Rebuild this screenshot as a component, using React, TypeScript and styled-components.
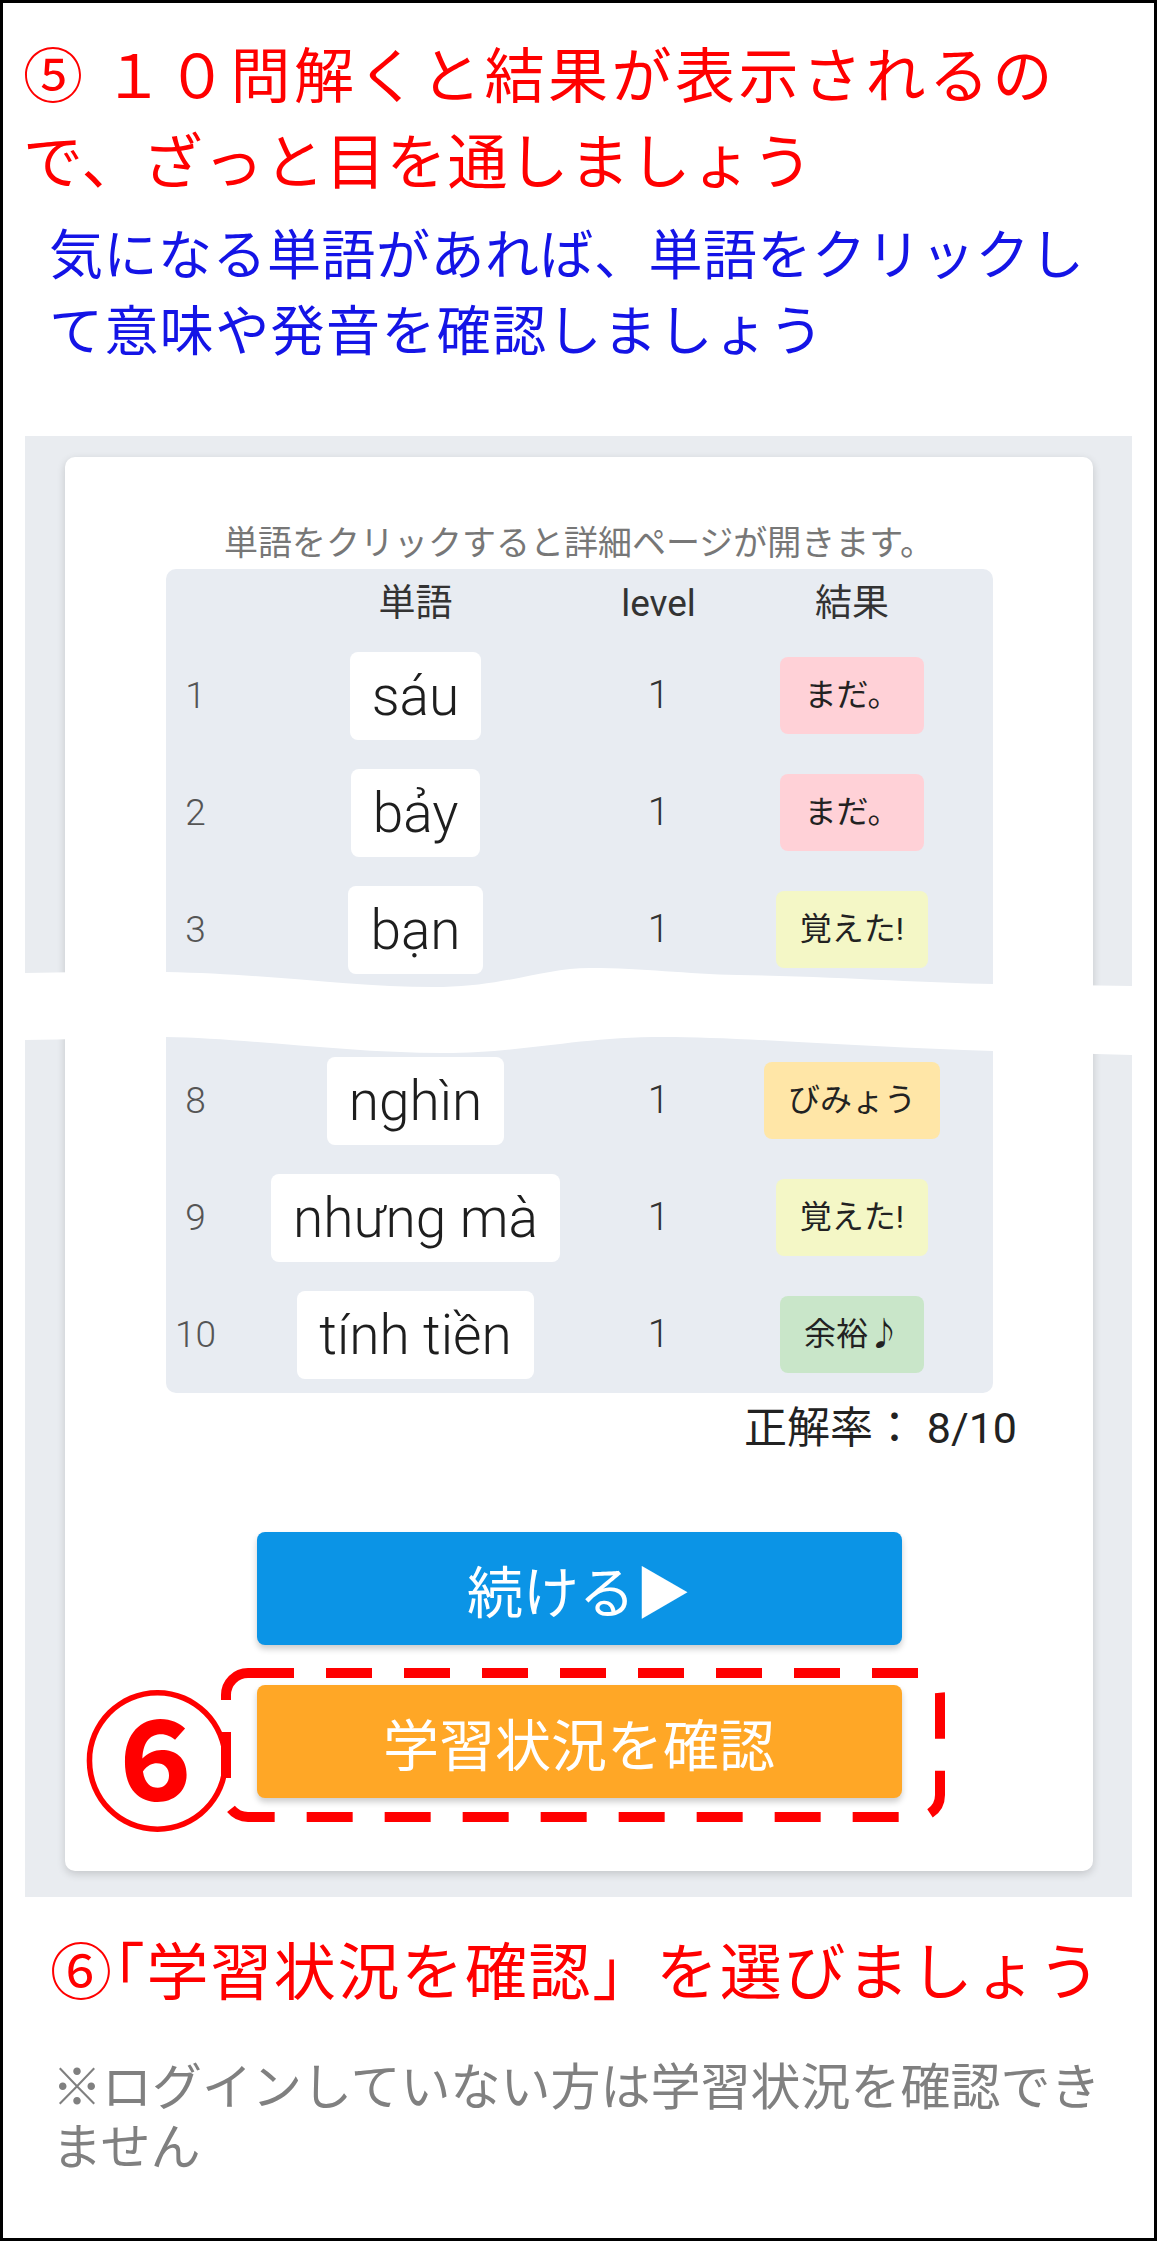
import styled, { createGlobalStyle } from 'styled-components';

const GlobalStyle = createGlobalStyle`
  html, body {
    margin: 0;
    padding: 0;
    background: #fff;
  }
  body {
    font-family: 'Noto Sans CJK JP', sans-serif;
  }
`;

const jp = `'Noto Sans CJK JP', sans-serif`;
const latin = `Roboto, 'Noto Sans CJK JP', sans-serif`;

const Page = styled.div`
  box-sizing: border-box;
  width: 1157px;
  height: 2241px;
  border: 3px solid #000;
  background: #fff;
  overflow: hidden;
`;

const Lead = styled.h1`
  margin: 0;
  padding: 26px 0 0 20px;
  font: 400 60px/86px ${jp};
  color: #f00;
`;

const Hint = styled.p`
  margin: 13px 0 0;
  padding-left: 46px;
  font: 400 54px/76px ${jp};
  color: #1414e6;
`;

const Line = styled.span<{ $track?: number }>`
  display: block;
  white-space: nowrap;
  letter-spacing: ${(p) => p.$track ?? 0}px;
`;

const Panel = styled.section`
  position: relative;
  margin: 70px 22px 0;
  padding: 21px 39px 26px 40px;
  background: #e9ecf0;
`;

const Card = styled.div`
  background: #fff;
  border-radius: 10px;
  box-shadow: 0 3px 8px rgba(0, 0, 0, 0.16);
  padding: 62px 0 73px;
`;

const Caption = styled.p`
  margin: 0 0 6px;
  text-align: center;
  font: 400 34px/44px ${jp};
  color: #777;
`;

const Table = styled.div`
  width: 827px;
  margin: 0 auto;
  background: #e8ecf2;
  border-radius: 10px;
`;

const Row = styled.div<{ $head?: boolean }>`
  display: grid;
  grid-template-columns: 60px 380px 106px 1fr;
  align-items: center;
  justify-items: center;
  height: ${(p) => (p.$head ? '68px' : '117px')};
`;

const HeadCell = styled.span`
  font: 400 37px/1 ${latin};
  color: #333;
`;

const Num = styled.span`
  font: 300 37px/1 ${latin};
  color: #555;
`;

const Level = styled.span`
  font: 300 39px/1 ${latin};
  color: #333;
`;

const Word = styled.span`
  background: #fff;
  border-radius: 8px;
  padding: 0 22px;
  height: 88px;
  font: 300 55px/88px ${latin};
  color: #1e1e1e;
  white-space: nowrap;
`;

type Tone = 'pink' | 'yellow' | 'orange' | 'green';

const toneColors: Record<Tone, string> = {
  pink: '#ffd1d7',
  yellow: '#f4f7c6',
  orange: '#ffe6a7',
  green: '#c9e6c9',
};

const Badge = styled.span<{ $tone: Tone }>`
  background: ${(p) => toneColors[p.$tone]};
  border-radius: 8px;
  padding: 0 24px;
  height: 77px;
  font: 400 32px/77px ${latin};
  color: #222;
  white-space: nowrap;
`;

const Break = styled.div`
  height: 54px;
`;

const Wave = styled.svg`
  position: absolute;
  left: 0;
  right: 0;
  width: 100%;
  height: 100px;
  margin-top: -28px;
  display: block;
`;

const Score = styled.div`
  display: flex;
  justify-content: flex-end;
  margin-top: 7px;
  padding-right: 76px;
  font: 400 43px/56px ${latin};
  color: #222;
`;

const Actions = styled.div`
  display: flex;
  flex-direction: column;
  align-items: center;
  gap: 40px;
  margin-top: 76px;
`;

const Button = styled.div<{ $color: string }>`
  width: 645px;
  height: 113px;
  border-radius: 8px;
  background: ${(p) => p.$color};
  color: #fff;
  text-align: center;
  font: 400 56px/113px ${jp};
  box-shadow: 0 4px 6px rgba(0, 0, 0, 0.2);
`;

const Focus = styled.div`
  position: relative;
`;

const DashFrame = styled.svg`
  position: absolute;
  left: -36px;
  top: -17px;
  width: 724px;
  height: 154px;
  pointer-events: none;
`;

const Marker = styled.span`
  position: absolute;
  right: 100%;
  top: 50%;
  margin-right: 24px;
  transform: translateY(-43%);
  font: 700 150px/1 ${jp};
  color: #f00;
`;

const Step = styled.p`
  margin: 28px 0 0;
  padding-left: 47px;
  font: 400 62px/86px ${jp};
  letter-spacing: 1.7px;
  color: #f00;
  white-space: nowrap;
`;

const Bracket = styled.span`
  font-feature-settings: 'halt' 1;
`;

const Note = styled.p`
  margin: 42px 0 0;
  padding-left: 49px;
  font: 400 50px/60px ${jp};
  color: #808080;
`;

type Item = { n: number; word: string; result: string; tone: Tone };

const upper: Item[] = [
  { n: 1, word: 'sáu', result: 'まだ。', tone: 'pink' },
  { n: 2, word: 'bảy', result: 'まだ。', tone: 'pink' },
  { n: 3, word: 'bạn', result: '覚えた!', tone: 'yellow' },
];

const lower: Item[] = [
  { n: 8, word: 'nghìn', result: 'びみょう', tone: 'orange' },
  { n: 9, word: 'nhưng mà', result: '覚えた!', tone: 'yellow' },
  { n: 10, word: 'tính tiền', result: '余裕♪', tone: 'green' },
];

function ResultRow({ item }: { item: Item }) {
  return (
    <Row>
      <Num>{item.n}</Num>
      <Word>{item.word}</Word>
      <Level>1</Level>
      <Badge $tone={item.tone}>{item.result}</Badge>
    </Row>
  );
}

export default function App() {
  return (
    <Page>
      <GlobalStyle />
      <Lead>
        <Line $track={3.5}>⑤ １０問解くと結果が表示されるの</Line>
        <Line $track={1}>で、ざっと目を通しましょう</Line>
      </Lead>
      <Hint>
        <Line $track={0.5}>気になる単語があれば、単語をクリックし</Line>
        <Line $track={1.4}>て意味や発音を確認しましょう</Line>
      </Hint>

      <Panel>
        <Card>
          <Caption>単語をクリックすると詳細ページが開きます。</Caption>
          <Table>
            <Row $head>
              <span />
              <HeadCell>単語</HeadCell>
              <HeadCell>level</HeadCell>
              <HeadCell>結果</HeadCell>
            </Row>
            {upper.map((item) => (
              <ResultRow key={item.n} item={item} />
            ))}
            <Break>
              <Wave viewBox="0 0 1107 100" preserveAspectRatio="none">
                <path
                  fill="#fff"
                  d="M0,13 C60,12 100,11 141,12 C250,14 330,28 418,27 C480,26 520,8 565,8 C620,8 660,14 713,15 C820,17 900,23 968,24 L1107,26 L1107,95 L968,91 C850,88 720,77 639,77 C550,77 500,93 418,93 C320,93 220,78 141,77 C90,77 40,80 0,80 Z"
                />
              </Wave>
            </Break>
            {lower.map((item) => (
              <ResultRow key={item.n} item={item} />
            ))}
          </Table>
          <Score>正解率： 8/10</Score>
          <Actions>
            <Button $color="#0b94e6">続ける▶</Button>
            <Focus>
              <Button $color="#ffa726">学習状況を確認</Button>
              <DashFrame viewBox="0 0 724 154">
                <rect
                  x="5"
                  y="5"
                  width="714"
                  height="144"
                  rx="22"
                  fill="none"
                  stroke="#f00"
                  strokeWidth="10"
                  strokeDasharray="46 32"
                />
              </DashFrame>
              <Marker>⑥</Marker>
            </Focus>
          </Actions>
        </Card>
      </Panel>

      <Step>
        ⑥<Bracket>「</Bracket>学習状況を確認」を選びましょう
      </Step>
      <Note>
        <Line>※ログインしていない方は学習状況を確認でき</Line>
        <Line>ません</Line>
      </Note>
    </Page>
  );
}
